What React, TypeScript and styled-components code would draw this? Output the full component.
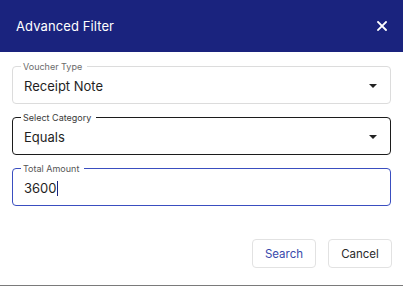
import styled, { createGlobalStyle } from "styled-components";

const GlobalStyle = createGlobalStyle`
  html, body {
    margin: 0;
    padding: 0;
    background: #fff;
  }
  body {
    font-family: Inter, "Noto Sans", sans-serif;
  }
`;

const Dialog = styled.div`
  width: 403px;
  height: 285px;
  background: #fff;
  border-bottom: 1px solid #7a7a7a;
  display: flex;
  flex-direction: column;
`;

const Header = styled.div`
  height: 52px;
  background: #1a237e;
  display: flex;
  align-items: center;
  justify-content: space-between;
  padding: 0 16px;
  color: #fff;
`;

const Title = styled.h2`
  margin: 0;
  font-size: 13px;
  font-weight: 400;
  letter-spacing: 0.1px;
`;

const CloseButton = styled.button`
  border: 0;
  background: none;
  padding: 0;
  width: 10px;
  height: 10px;
  display: flex;
  color: #fff;
  cursor: pointer;
`;

const Body = styled.div`
  display: flex;
  flex-direction: column;
  gap: 13px;
  padding: 14px 12px 0 12px;
`;

type Tone = "idle" | "hover" | "focus";

const borderColors: Record<Tone, string> = {
  idle: "#dcdcdc",
  hover: "#1c1c1c",
  focus: "#3a4ec0",
};

const labelColors: Record<Tone, string> = {
  idle: "#6b6b6b",
  hover: "#3a3a3a",
  focus: "#555",
};

const Field = styled.div`
  position: relative;
  height: 38px;
  display: flex;
  align-items: center;
  padding: 0 14px 0 12px;
`;

const Outline = styled.fieldset<{ $tone: Tone }>`
  position: absolute;
  top: -5px;
  left: 0;
  right: 0;
  bottom: 0;
  margin: 0;
  padding: 0 8px;
  border: 1px solid ${(p) => borderColors[p.$tone]};
  border-radius: 4px;
  pointer-events: none;
`;

const Legend = styled.legend<{ $tone: Tone }>`
  padding: 0 5px 0 2px;
  height: 11px;
  font-size: 9px;
  line-height: 11px;
  color: ${(p) => labelColors[p.$tone]};
`;

const Value = styled.div`
  flex: 1;
  font-size: 13px;
  color: #1f1f1f;
  margin-top: 1px;
`;

const Caret = styled.span`
  display: inline-block;
  width: 1px;
  height: 15px;
  background: #1a237e;
  vertical-align: -3px;
`;

const Arrow = styled.svg`
  width: 8px;
  height: 4px;
  fill: #222;
  margin-top: 2px;
`;

const Footer = styled.div`
  margin-top: auto;
  display: flex;
  justify-content: flex-end;
  gap: 12px;
  padding: 0 11px 17px 0;
`;

const Button = styled.button<{ $primary?: boolean }>`
  width: 64px;
  height: 29px;
  border: 1px solid #e2e2e2;
  border-radius: 4px;
  background: #fff;
  font-family: Inter, "Noto Sans", sans-serif;
  font-size: 11.5px;
  color: ${(p) => (p.$primary ? "#3949ab" : "#2a2a2a")};
  cursor: pointer;
`;

function SelectField({ label, value, tone }: { label: string; value: string; tone: Tone }) {
  return (
    <Field>
      <Value>{value}</Value>
      <Arrow viewBox="0 0 8 4">
        <path d="M0 0h8L4 4z" />
      </Arrow>
      <Outline $tone={tone}>
        <Legend $tone={tone}>{label}</Legend>
      </Outline>
    </Field>
  );
}

export default function App() {
  return (
    <>
      <GlobalStyle />
      <Dialog>
        <Header>
          <Title>Advanced Filter</Title>
          <CloseButton aria-label="close">
            <svg width="10" height="10" viewBox="0 0 10 10">
              <path d="M1 1l8 8M9 1l-8 8" stroke="#fff" strokeWidth="1.8" strokeLinecap="square" />
            </svg>
          </CloseButton>
        </Header>
        <Body>
          <SelectField label="Voucher Type" value="Receipt Note" tone="idle" />
          <SelectField label="Select Category" value="Equals" tone="hover" />
          <Field>
            <Value>
              3600
              <Caret />
            </Value>
            <Outline $tone="focus">
              <Legend $tone="focus">Total Amount</Legend>
            </Outline>
          </Field>
        </Body>
        <Footer>
          <Button $primary>Search</Button>
          <Button>Cancel</Button>
        </Footer>
      </Dialog>
    </>
  );
}
